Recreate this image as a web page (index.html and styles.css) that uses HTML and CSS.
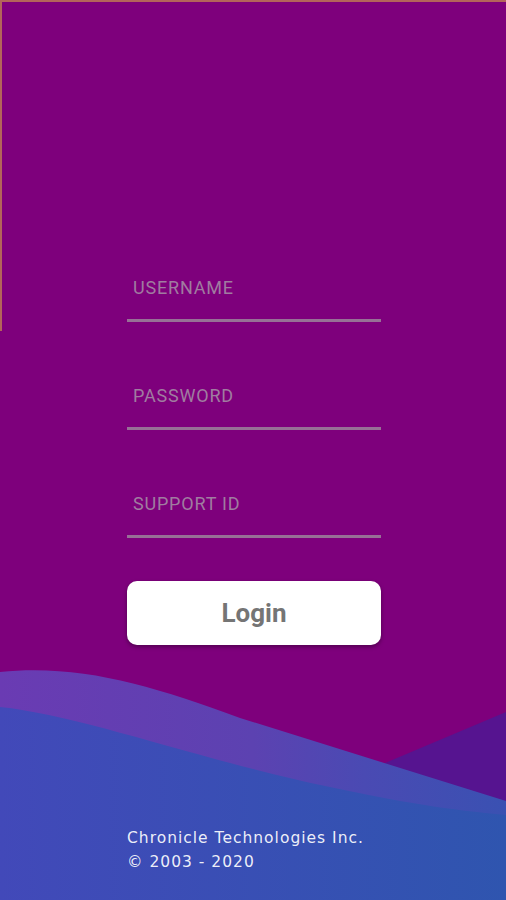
FILE: index.html
```html
<!DOCTYPE html>
<html lang="en">
<head>
    <meta charset="UTF-8">
    <meta name="viewport" content="width=device-width, initial-scale=1.0">
    <title>Login</title>
    <link rel="stylesheet" href="styles.css">
</head>
<body>
    <div class="frame"></div>

    <svg class="waves" viewBox="0 0 506 250" width="506" height="250" aria-hidden="true">
        <defs>
            <linearGradient id="waveMid" x1="0" y1="0" x2="1" y2="0">
                <stop offset="0" stop-color="#6a3bb3"/>
                <stop offset="0.5" stop-color="#5c42b1"/>
                <stop offset="0.72" stop-color="#4a4ab3"/>
                <stop offset="1" stop-color="#3a51b2"/>
            </linearGradient>
            <linearGradient id="waveFront" x1="0" y1="0" x2="1" y2="0">
                <stop offset="0" stop-color="#4249b9"/>
                <stop offset="1" stop-color="#2f55af"/>
            </linearGradient>
        </defs>
        <path d="M250,170 L506,62 V250 H250 Z" fill="#561490"/>
        <path d="M0,22 C80,14 150,35 240,68 L506,151 V250 H0 Z" fill="url(#waveMid)"/>
        <path d="M0,57 C80,65 200,110 330,137 C400,152 450,160 506,165 V250 H0 Z" fill="url(#waveFront)"/>
    </svg>

    <main class="login">
        <form class="login-form" onsubmit="return false;">
            <div class="field">
                <input type="text" placeholder="USERNAME">
            </div>
            <div class="field">
                <input type="password" placeholder="PASSWORD">
            </div>
            <div class="field">
                <input type="text" placeholder="SUPPORT ID">
            </div>
            <button type="submit" class="login-btn">Login</button>
        </form>

        <footer class="footer">
            <div>Chronicle Technologies Inc.</div>
            <div>© 2003 - 2020</div>
        </footer>
    </main>
</body>
</html>
```

FILE: styles.css
```css
* {
    box-sizing: border-box;
}
body {
    margin: 0;
    width: 506px;
    height: 900px;
    overflow: hidden;
    position: relative;
    background: #7e007c;
    font-family: Roboto, "Liberation Sans", Arial, sans-serif;
}
.frame {
    position: absolute;
    top: 0;
    left: 0;
    width: 506px;
    height: 331px;
    border-top: 2px solid #b4645a;
    border-left: 2px solid #b4645a;
}
.waves {
    position: absolute;
    left: 0;
    top: 650px;
    display: block;
}
.login {
    position: relative;
    z-index: 1;
    padding: 275px 0 0 127px;
}
.login-form {
    width: 254px;
    display: flex;
    flex-direction: column;
}
.field {
    margin-bottom: 61px;
}
.field:nth-child(3) {
    margin-bottom: 43px;
}
.field input {
    display: block;
    width: 100%;
    background: transparent;
    border: none;
    border-bottom: 3px solid #977096;
    padding: 0 0 20px 6px;
    height: 47px;
    line-height: 24px;
    font-family: inherit;
    font-size: 18px;
    letter-spacing: 0.8px;
    color: #e9d9e9;
    outline: none;
}
.field input::placeholder {
    color: #a07ca0;
}
.login-btn {
    height: 64px;
    border: none;
    border-radius: 10px;
    background: #fff;
    box-shadow: 0 2px 4px rgba(0, 0, 0, 0.35);
    font-family: inherit;
    font-size: 26px;
    font-weight: bold;
    color: #757575;
    cursor: pointer;
}
.footer {
    margin-top: 181px;
    font-family: "DejaVu Sans", sans-serif;
    font-size: 15.5px;
    letter-spacing: 1px;
    line-height: 24px;
    color: rgba(255, 255, 255, 0.92);
}
```
